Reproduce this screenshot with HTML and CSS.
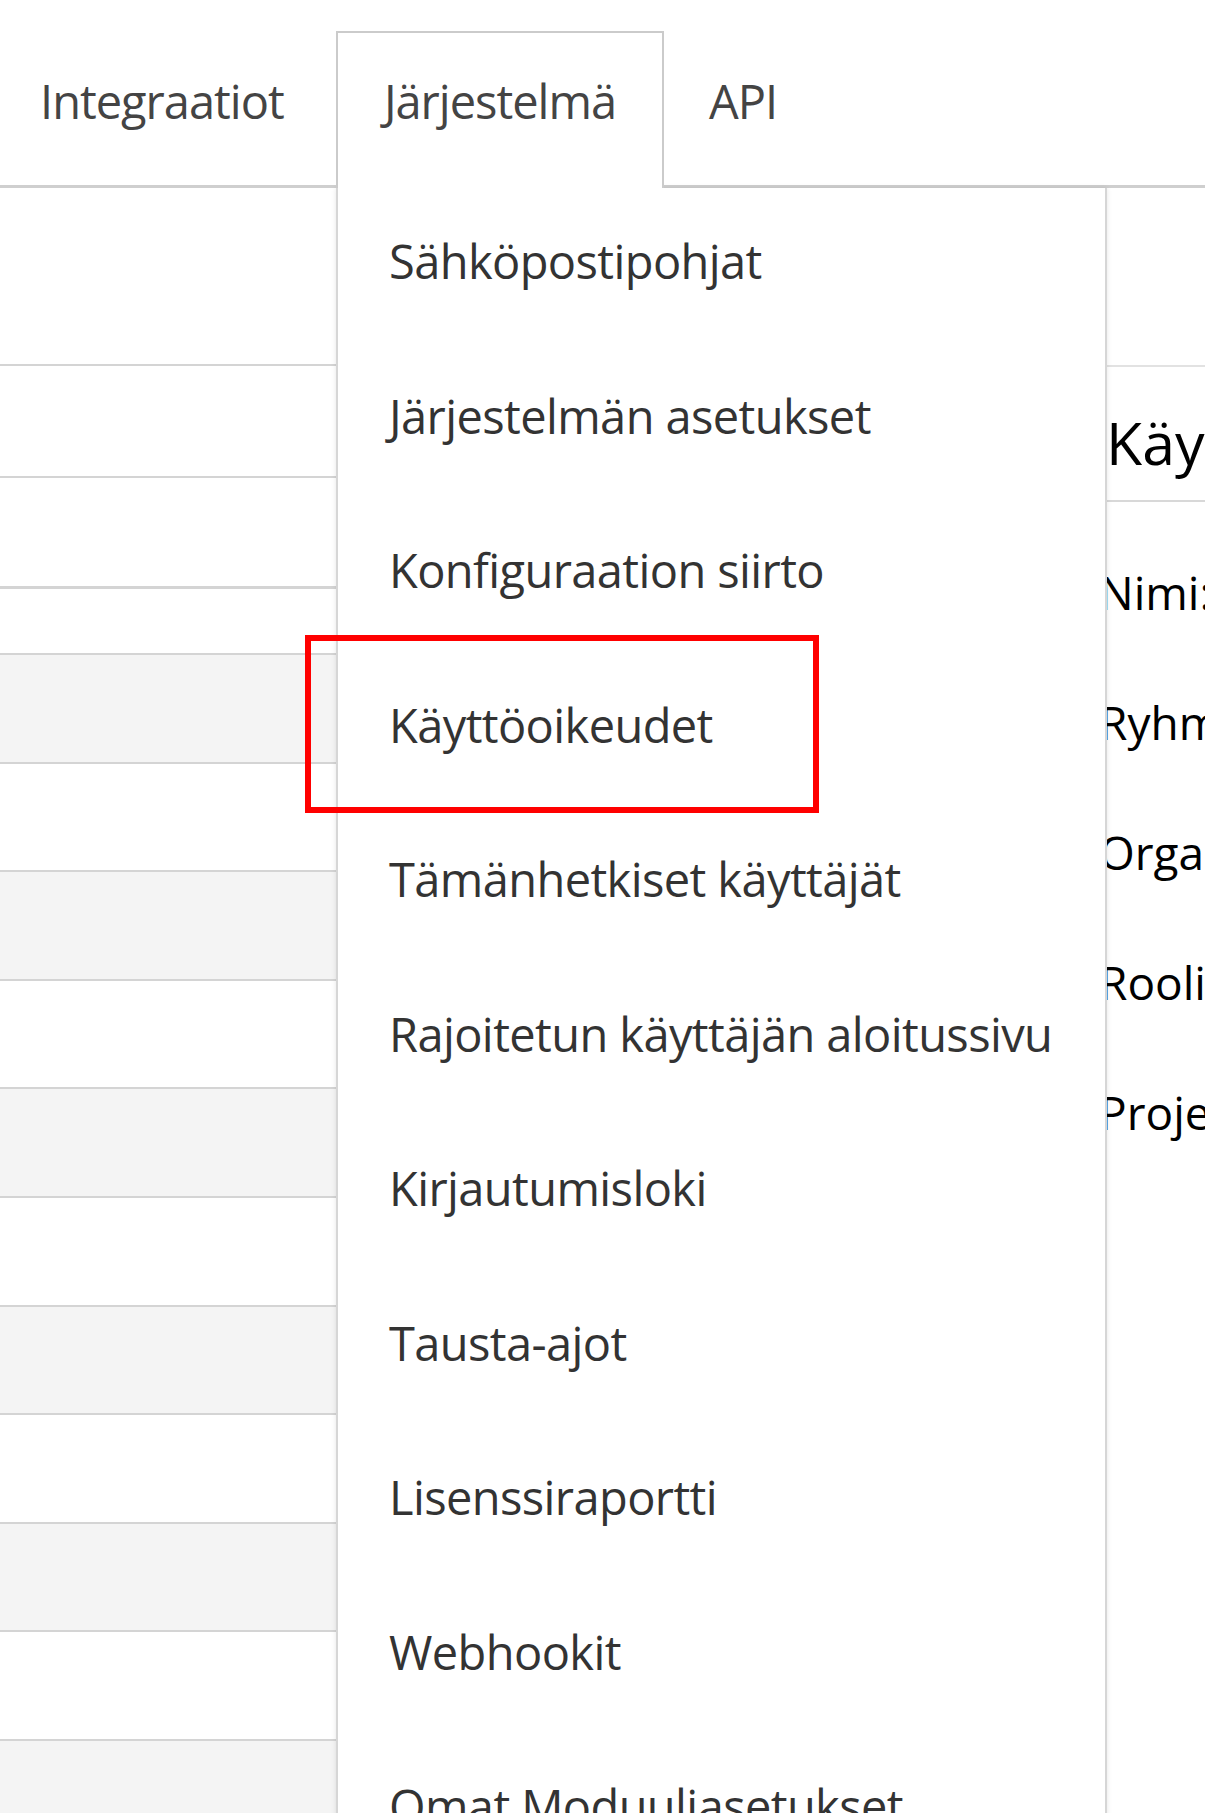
FILE: index.html
```html
<!DOCTYPE html>
<html lang="fi">

<head>
    <meta charset="UTF-8">
    <meta name="viewport" content="width=device-width, initial-scale=1.0">
    <title>Järjestelmä</title>
    <link rel="stylesheet" href="styles.css">
</head>

<body>
    <div class="tabs">
        <div class="tab tab-first">Integraatiot</div>
        <div class="tab tab-active">Järjestelmä</div>
        <div class="tab tab-api">API</div>
    </div>

    <div class="main">
        <div class="list">
            <div class="row row-a"></div>
            <div class="row row-b"></div>
            <div class="row row-c"></div>
            <div class="row row-d"></div>
            <div class="zebra">
                <div class="row"></div>
                <div class="row"></div>
                <div class="row"></div>
                <div class="row"></div>
                <div class="row"></div>
                <div class="row"></div>
                <div class="row"></div>
                <div class="row"></div>
                <div class="row"></div>
                <div class="row"></div>
                <div class="row"></div>
            </div>
        </div>

        <div class="detail">
            <div class="detail-head"><span class="caret"></span>Käyttöoikeudet</div>
            <div class="fields">
                <div class="field">Nimi:</div>
                <div class="field">Ryhmä:</div>
                <div class="field">Organisaatio:</div>
                <div class="field">Rooli:</div>
                <div class="field">Projektit:</div>
            </div>
        </div>

        <!-- dropdown of the active tab -->
        <div class="menu">
            <ul>
                <li>Sähköpostipohjat</li>
                <li>Järjestelmän asetukset</li>
                <li>Konfiguraation siirto</li>
                <li class="marked">Käyttöoikeudet</li>
                <li>Tämänhetkiset käyttäjät</li>
                <li>Rajoitetun käyttäjän aloitussivu</li>
                <li>Kirjautumisloki</li>
                <li>Tausta-ajot</li>
                <li>Lisenssiraportti</li>
                <li>Webhookit</li>
                <li>Omat Moduuliasetukset</li>
            </ul>
        </div>
    </div>
</body>

</html>
```

FILE: styles.css
```css
* {
    box-sizing: border-box;
}

html,
body {
    margin: 0;
    padding: 0;
    overflow: hidden;
    background: #fff;
}

body {
    width: 1205px;
    height: 1813px;
    font-family: "Open Sans", "Noto Sans", sans-serif;
}

/* tab bar */
.tabs {
    display: flex;
    align-items: flex-end;
    height: 188px;
    border-bottom: 3px solid #cfcfcf;
}

.tab {
    height: 185px;
    padding-top: 69px;
    font-size: 47px;
    line-height: 64px;
    letter-spacing: -1px;
    color: #444;
    white-space: nowrap;
}

.tab-first {
    width: 336px;
    padding-left: 40px;
}

.tab-active {
    position: relative;
    z-index: 2;
    width: 328px;
    height: 157px;
    margin-bottom: -3px;
    padding-top: 36px;
    text-align: center;
    background: #fff;
    border: 2px solid #cbcbcb;
    border-bottom: none;
}

.tab-api {
    padding-left: 45px;
}

/* page below the tabs */
.main {
    position: relative;
    display: flex;
}

.list {
    width: 1099px;
    flex: none;
}

.row {
    border-bottom: 2px solid #d4d4d4;
}

.row-a {
    height: 178px;
}

.row-b {
    height: 112px;
}

.row-c {
    height: 111px;
    border-bottom-width: 3px;
}

.row-d {
    height: 66px;
}

.zebra .row {
    height: 108.6px;
}

.zebra .row:nth-child(odd) {
    background: #f4f4f4;
}

.detail {
    flex: 1;
    overflow: hidden;
    padding-top: 177px;
    color: #000;
}

.detail-head {
    position: relative;
    height: 137px;
    padding: 35px 0 0 7px;
    font-size: 59px;
    line-height: 80px;
    white-space: nowrap;
    border-top: 2px solid #e2e2e2;
    border-bottom: 2px solid #d8d8d8;
}

.caret {
    position: absolute;
    left: 5px;
    top: 54px;
    width: 3px;
    height: 45px;
    background: #a8d4f5;
}

.fields {
    padding-top: 25px;
}

.field {
    font-size: 46px;
    line-height: 130px;
    white-space: nowrap;
}

/* dropdown */
.menu {
    position: absolute;
    z-index: 1;
    left: 336px;
    top: 0;
    width: 771px;
    height: 1700px;
    background: #fff;
    border-left: 2px solid #d6d6d6;
    border-right: 2px solid #d6d6d6;
    box-shadow: 0 0 5px rgba(0, 0, 0, 0.1);
}

.menu ul {
    list-style: none;
    margin: -4px 0 0;
    padding: 0 0 0 51px;
}

.menu li {
    position: relative;
    height: 154.5px;
    font-size: 47px;
    line-height: 154.5px;
    letter-spacing: -0.6px;
    color: #333;
    white-space: nowrap;
}

.marked::after {
    content: "";
    position: absolute;
    box-sizing: border-box;
    left: -84px;
    top: -13px;
    width: 514px;
    height: 178px;
    border: 6px solid #f00;
}
```
